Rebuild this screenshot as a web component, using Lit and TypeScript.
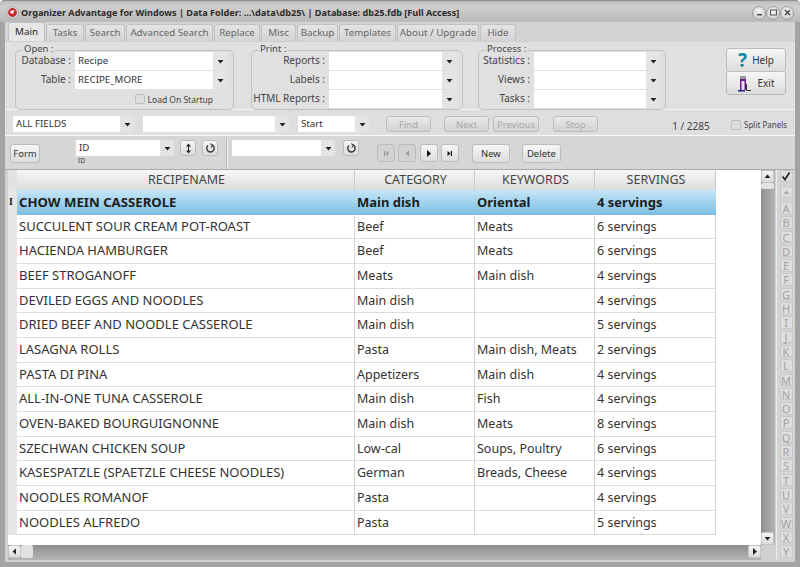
import { LitElement, html, css } from "lit";
import { customElement } from "lit/decorators.js";

const ROWS = [
  ["CHOW MEIN CASSEROLE", "Main dish", "Oriental", "4 servings"],
  ["SUCCULENT SOUR CREAM POT-ROAST", "Beef", "Meats", "6 servings"],
  ["HACIENDA HAMBURGER", "Beef", "Meats", "6 servings"],
  ["BEEF STROGANOFF", "Meats", "Main dish", "4 servings"],
  ["DEVILED EGGS AND NOODLES", "Main dish", "", "4 servings"],
  ["DRIED BEEF AND NOODLE CASSEROLE", "Main dish", "", "5 servings"],
  ["LASAGNA ROLLS", "Pasta", "Main dish, Meats", "2 servings"],
  ["PASTA DI PINA", "Appetizers", "Main dish", "4 servings"],
  ["ALL-IN-ONE TUNA CASSEROLE", "Main dish", "Fish", "4 servings"],
  ["OVEN-BAKED BOURGUIGNONNE", "Main dish", "Meats", "8 servings"],
  ["SZECHWAN CHICKEN SOUP", "Low-cal", "Soups, Poultry", "6 servings"],
  ["KASESPATZLE (SPAETZLE CHEESE NOODLES)", "German", "Breads, Cheese", "4 servings"],
  ["NOODLES ROMANOF", "Pasta", "", "4 servings"],
  ["NOODLES ALFREDO", "Pasta", "", "5 servings"],
];
const TABS: [string, number][] = [
  ["Main", 37], ["Tasks", 38], ["Search", 40], ["Advanced Search", 87], ["Replace", 46],
  ["Misc", 35], ["Backup", 41], ["Templates", 57], ["About / Upgrade", 82], ["Hide", 36],
];
const LETTERS = "ABCDEFGHIJKLMNOPQRSTUVWXY".split("");

const arrow = (d: string, fill = "#222") =>
  html`<svg width="9" height="9" viewBox="0 0 9 9"><path d=${d} fill=${fill}></path></svg>`;
const DOWN = "M1.5 3h6L4.5 6.5z";
const UP = "M1.5 6h6L4.5 2.5z";
const LEFT = "M6 1.5v6L2.5 4.5z";
const RIGHT = "M3 1v7l4-3.5z";

const combo = (w: number, text = "", cls = "") => html`
  <div class="combo ${cls}" style="width:${w}px">
    <span class="combo-text">${text}</span>
    <span class="combo-btn">${arrow(DOWN)}</span>
  </div>`;

const refresh = html`<svg width="11" height="11" viewBox="0 0 11 11" fill="none" stroke="#333" stroke-width="1.4">
  <path d="M3 2.6a3.7 3.7 0 1 0 4.6-.3"></path><path d="M5.2 .6L7.8 2.2 5.8 4.3" stroke-width="1.1"></path></svg>`;
const sortIcon = html`<svg width="9" height="11" viewBox="0 0 9 11">
  <path d="M4.5 .5L7 3.5H2zM4.5 10.5L7 7.5H2z" fill="#222"></path><rect x="4" y="3" width="1" height="5" fill="#222"></rect></svg>`;

@customElement("app-root")
export class AppRoot extends LitElement {
  static styles = css`
    :host {
      display: block; width: 800px; height: 567px; overflow: hidden;
      font-family: "Noto Sans", "Liberation Sans", sans-serif; color: #333; font-size: 10px;
    }
    * { box-sizing: border-box; }
    .win {
      width: 800px; height: 567px; display: flex; flex-direction: column;
      background: #a3a3a3; border-radius: 5px 5px 0 0; padding: 0 5px 5px 5px;
    }
    .title {
      flex: none; height: 22px; margin: 0 -5px; padding: 2px 5px 0 6px; display: flex; align-items: center; gap: 2px;
      background: linear-gradient(#bdbdbd, #cfcfcf 25%, #b9b9b9); border-top: 1px solid #8d8d8d;
      border-radius: 5px 5px 0 0;
      font-weight: 700; font-size: 9.1px; color: #2b2b2b; white-space: nowrap;
    }
    .title-text { flex: 1; }
    .wc { display: flex; margin-right: 1px; }
    .wc span {
      width: 14px; height: 14px; border-radius: 50%; border: 1px solid #9c9c9c;
      background: radial-gradient(circle at 50% 35%, #f4f4f4, #c6c6c6); display: flex; align-items: center; justify-content: center;
    }
    .tabs { flex: none; height: 19px; padding-left: 3px; display: flex; background: #d4d4d4; align-items: flex-end; gap: 1px; }
    .tab {
      height: 17px; display: flex; align-items: center; justify-content: center; border: 1px solid #c2c2c2; border-bottom: none;
      border-radius: 3px 3px 0 0; background: linear-gradient(#e4e4e4, #d4d4d4); color: #666; font-size: 9.75px; flex: none;
      padding-bottom: 2px;
    }
    .tab.on { height: 19px; color: #222; background: #e6e6e6; }
    .body { flex: 1; min-height: 0; background: #dcdcdc; display: flex; flex-direction: column; }
    .top {
      flex: none; height: 69px; padding: 8px 8px 0 10px; display: flex; background: #e0e0e0; border-top: 1px solid #cfcfcf;
      border-bottom: 1px solid #f4f4f4;
    }
    .group {
      position: relative; height: 60px; border: 1px solid #c0c0c0; border-radius: 5px; padding: 1px 0 0 0;
      display: flex; flex-direction: column; gap: 1px; flex: none;
    }
    .legend { position: absolute; left: 7px; top: -7px; background: #e0e0e0; padding: 0 1px; line-height: 10px; font-size: 9.5px; color: #444; }
    .fr { display: flex; align-items: center; height: 18px; }
    .fr label { text-align: right; font-size: 10px; line-height: 12px; margin-top: -2px; color: #444; padding-right: 4px; white-space: nowrap; flex: none; }
    .combo { height: 18px; display: flex; background: #fff; flex: none; }
    .combo-text { flex: 1; padding-left: 3px; font-size: 9.75px; line-height: 17px; color: #333; white-space: nowrap; overflow: hidden; }
    .combo-btn { flex: none; width: 14px; background: #e4e4e4; display: flex; align-items: center; justify-content: center; }
    .small { height: 16px; } .small .combo-text { line-height: 16px; }
    .load { justify-content: flex-end; gap: 3px; padding-right: 20px; font-size: 8.5px; color: #444; }
    .cb { width: 10px; height: 10px; border: 1px solid #bdbdbd; border-radius: 2px; background: #dedede; flex: none; }
    .side { margin-left: 60px; margin-top: -1px; display: flex; flex-direction: column; flex: none; }
    .btn {
      border: 1px solid #bcbcbc; border-radius: 3px; background: linear-gradient(#f6f6f6, #dcdcdc);
      display: flex; align-items: center; justify-content: center; color: #333; flex: none; font-size: 9.5px;
    }
    .big { width: 60px; height: 24px; gap: 5px; margin-top: -1px; font-size: 10px; }
    .q { color: #0e8a9c; font-weight: 700; font-size: 19px; line-height: 1; }
    .search {
      flex: none; height: 26px; padding: 6px 0 0 8px; display: flex; align-items: flex-start;
      border-bottom: 1px solid #fafafa; background: #dedede;
    }
    .sp { flex: none; }
    .dis { height: 16px; color: #a9a9a9; background: linear-gradient(#e9e9e9, #d2d2d2); }
    .count { flex: none; width: 70px; margin-left: 58px; text-align: center; padding-top: 3px; line-height: 14px; color: #444; font-size: 10px; white-space: nowrap; }
    .split { flex: none; display: flex; align-items: center; gap: 3px; padding-top: 3px; margin-left: 5px; font-size: 8px; color: #444; white-space: nowrap; }
    .tools { flex: none; height: 34px; display: flex; background: #d6d6d6; border-bottom: 1px solid #a9a9a9; padding-left: 5px; }
    .form { width: 30px; height: 19px; margin-top: 8px; margin-right: 36px; }
    .cg { display: flex; gap: 6px; padding: 4px 0 0 0; align-items: flex-start; flex: none; }
    .cg .btn { width: 16px; height: 16px; }
    .idcol { display: flex; flex-direction: column; }
    .idcol small { font-size: 6.5px; line-height: 10px; padding-left: 2px; }
    .sep { border-left: 1px solid #bdbdbd; border-right: 1px solid #f0f0f0; width: 2px; height: 30px; margin: 2px 4px 0 8px; flex: none; }
    .nav { display: flex; gap: 3.3px; margin-top: 8px; margin-left: 18px; flex: none; }
    .nav .btn { width: 18px; height: 18px; }
    .nav .off { background: #d2d2d2; }
    .act { height: 19px; margin-top: 8px; }
    .gridwrap { flex: 1; min-height: 0; display: flex; background: #d0d0d0; padding: 0 0 2px 3px; }
    .main { width: 767px; flex: none; background: #fff; display: flex; }
    .left { flex: 1; min-width: 0; display: flex; flex-direction: column; }
    .tbl { flex: 1; min-height: 0; }
    .row {
      display: grid; grid-template-columns: 9px 338px 120px 120px 121px; width: 708px; height: 24.66px;
      font-size: 12.5px; color: #333;
    }
    .cell {
      border-right: 1px solid #d5d5d5; border-bottom: 1px solid #dcdcdc; padding-left: 2px; line-height: 23px;
      white-space: nowrap; overflow: hidden;
    }
    .cell.name { font-size: 13px; }
    .gut { background: #e6e6e6; border-right: none; padding: 0; border-bottom: none; font-weight: 700; font-size: 10px; font-family: "Liberation Serif", serif; }
    .head { height: 20px; font-size: 12.5px; color: #444; }
    .head .cell { text-align: center; line-height: 19px; background: linear-gradient(#f7f7f7, #dcdcdc); border-right: 1px solid #c9c9c9; border-bottom: none; }
    .head .gut { background: #e2e2e2; border-right: none; }
    .sel { font-weight: 700; color: #1d1d1d; font-size: 13px; }
    .sel .cell { background: linear-gradient(#c6e6f6, #7bbde4); border: none; line-height: 24px; }
    .sel .cell.name { font-size: 13.2px; }
    .sel .gut { background: #e6e6e6; padding-left: 1px; line-height: 23px; }
    .hbar { flex: none; height: 15px; background: linear-gradient(#8f8f8f, #b5b5b5); display: flex; }
    .sbtn { width: 13px; height: 13px; background: linear-gradient(#f5f5f5, #dadada); border: 1px solid #c4c4c4; border-radius: 2px; display: flex; align-items: center; justify-content: center; flex: none; }
    .thumb { width: 12px; height: 13px; background: #e2e2e2; border-radius: 2px; flex: none; }
    .grow { flex: 1; }
    .vbar { width: 14px; flex: none; background: linear-gradient(90deg, #8f8f8f, #b3b3b3); display: flex; flex-direction: column; }
    .vthumb { width: 13px; height: 6px; background: #e2e2e2; border-radius: 2px; }
    .corner { height: 15px; background: #d0d0d0; flex: none; }
    .alpha { flex: 1; background: #d4d4d4; border-left: 1px solid #ececec; margin-left: 1px; display: flex; flex-direction: column; align-items: center; }
    .lt {
      width: 13px; height: 12.5px; margin-bottom: 1.8px; border: 1px solid #c8c8c8; border-radius: 2px; background: #dedede; flex: none;
      font-size: 11px; line-height: 11px; text-align: center; color: #a2a2a2;
    }
    .chk { height: 12px; margin-bottom: 4px; display: flex; align-items: center; justify-content: center; }
    .upb { height: 12px; margin-bottom: 4px; display: flex; align-items: center; justify-content: center; }
  `;

  private fr(label: string, w: number, cw: number, value = "") {
    return html`<div class="fr"><label style="width:${w}px">${label} :</label>${combo(cw, value)}</div>`;
  }

  render() {
    return html`
      <div class="win">
        <div class="title">
          <svg width="13" height="13" viewBox="0 0 13 13">
            <circle cx="6.5" cy="6.5" r="6" fill="#d8d8d8" stroke="#999" stroke-width=".6"></circle>
            <circle cx="6.5" cy="6.5" r="4.4" fill="#c9252c"></circle>
            <path d="M4 7a3 3 0 0 1 5-2l-2 1 1 2z" fill="#fff"></path>
          </svg>
          <span class="title-text">Organizer Advantage for Windows | Data Folder: ...\\data\\db25\\ | Database: db25.fdb [Full Access]</span>
          <div class="wc">
            <span><svg width="9" height="9" viewBox="0 0 9 9"><rect x="2" y="6" width="5" height="1.4" fill="#444"></rect></svg></span>
            <span><svg width="9" height="9" viewBox="0 0 9 9"><rect x="1.5" y="2" width="6" height="5" fill="none" stroke="#555"></rect></svg></span>
            <span><svg width="9" height="9" viewBox="0 0 9 9"><path d="M2 2l5 5M7 2l-5 5" stroke="#444" stroke-width="1.4"></path></svg></span>
          </div>
        </div>
        <div class="tabs">
          ${TABS.map(([t, w], i) => html`<div class="tab ${i === 0 ? "on" : ""}" style="width:${w}px">${t}</div>`)}
        </div>
        <div class="body">
          <div class="top">
            <div class="group" style="width:219px">
              <span class="legend">Open :</span>
              ${this.fr("Database", 59, 152, "Recipe")}
              ${this.fr("Table", 59, 152, "RECIPE_MORE")}
              <div class="fr load"><span class="cb"></span>Load On Startup</div>
            </div>
            <div class="group" style="width:212px;margin-left:17px">
              <span class="legend">Print :</span>
              ${this.fr("Reports", 77, 127)}${this.fr("Labels", 77, 127)}${this.fr("HTML Reports", 77, 127)}
            </div>
            <div class="group" style="width:188px;margin-left:15px">
              <span class="legend">Process :</span>
              ${this.fr("Statistics", 55, 126)}${this.fr("Views", 55, 126)}${this.fr("Tasks", 55, 126)}
            </div>
            <div class="side">
              <div class="btn big"><span class="q">?</span>Help</div>
              <div class="btn big">
                <svg width="15" height="17" viewBox="0 0 15 17">
                  <rect x="3" y="1" width="6" height="3" fill="#999"></rect>
                  <path d="M3 4h6v11h-1.5V6h-3v9H3z" fill="#6a1b8a"></path>
                  <path d="M1 15h7v1.5H1z" fill="#1c1c8a"></path>
                  <path d="M9.5 9v6.500H14" fill="none" stroke="#333"></path>
                </svg>Exit
              </div>
            </div>
          </div>
          <div class="search">
            ${combo(121, "ALL FIELDS", "small")}
            <div class="sp" style="width:9px"></div>${combo(146, "", "small")}
            <div class="sp" style="width:9px"></div>${combo(71, "Start", "small")}
            <div class="sp" style="width:17px"></div>
            <div class="btn dis" style="width:45px">Find</div>
            <div class="sp" style="width:13px"></div>
            <div class="btn dis" style="width:45px">Next</div>
            <div class="sp" style="width:4px"></div>
            <div class="btn dis" style="width:46px">Previous</div>
            <div class="sp" style="width:14px"></div>
            <div class="btn dis" style="width:45px">Stop</div>
            <div class="count">1 / 2285</div>
            <div class="split"><span class="cb"></span>Split Panels</div>
          </div>
          <div class="tools">
            <div class="btn form">Form</div>
            <div class="cg">
              <div class="idcol">${combo(98, "ID", "small")}<small>ID</small></div>
              <div class="btn">${sortIcon}</div>
              <div class="btn">${refresh}</div>
            </div>
            <div class="sep"></div>
            <div class="cg">
              ${combo(103, "", "small")}
              <div class="btn" style="margin-left:2px">${refresh}</div>
            </div>
            <div class="nav">
              <div class="btn off">${arrow("M6.500 2v5L3.500 4.500zM2 2h1.200v5H2z", "#999")}</div>
              <div class="btn off">${arrow(LEFT, "#999")}</div>
              <div class="btn">${arrow(RIGHT, "#111")}</div>
              <div class="btn">${arrow("M2.500 2v5l3-2.500zM5.800 2H7v5H5.800z", "#111")}</div>
            </div>
            <div class="btn act" style="width:38px;margin-left:13px">New</div>
            <div class="btn act" style="width:39px;margin-left:12px">Delete</div>
          </div>
          <div class="gridwrap">
            <div class="main">
              <div class="left">
                <div class="tbl">
                  <div class="row head">
                    <div class="cell gut"></div>
                    <div class="cell">RECIPENAME</div><div class="cell">CATEGORY</div>
                    <div class="cell">KEYWORDS</div><div class="cell">SERVINGS</div>
                  </div>
                  ${ROWS.map((r, i) => html`
                    <div class="row ${i === 0 ? "sel" : ""}">
                      <div class="cell gut">${i === 0 ? "I" : ""}</div>
                      ${r.map((c, j) => html`<div class="cell ${j === 0 ? "name" : ""}">${c}</div>`)}
                    </div>`)}
                </div>
                <div class="hbar">
                  <div class="sbtn">${arrow(LEFT)}</div><div class="thumb"></div>
                  <div class="grow"></div>
                  <div class="sbtn">${arrow(RIGHT)}</div>
                </div>
              </div>
              <div class="vbar">
                <div class="sbtn">${arrow(UP)}</div><div class="vthumb"></div>
                <div class="grow"></div>
                <div class="sbtn">${arrow(DOWN)}</div>
                <div class="corner"></div>
              </div>
            </div>
            <div class="alpha">
              <div class="lt chk"><svg width="10" height="10" viewBox="0 0 10 10"><path d="M1.500 5.500L4 8.500 8.500 1.500" fill="none" stroke="#222" stroke-width="1.700"></path></svg></div>
              <div class="lt upb">${arrow(UP, "#a8a8a8")}</div>
              ${LETTERS.map((l) => html`<div class="lt">${l}</div>`)}
            </div>
          </div>
        </div>
      </div>`;
  }
}
